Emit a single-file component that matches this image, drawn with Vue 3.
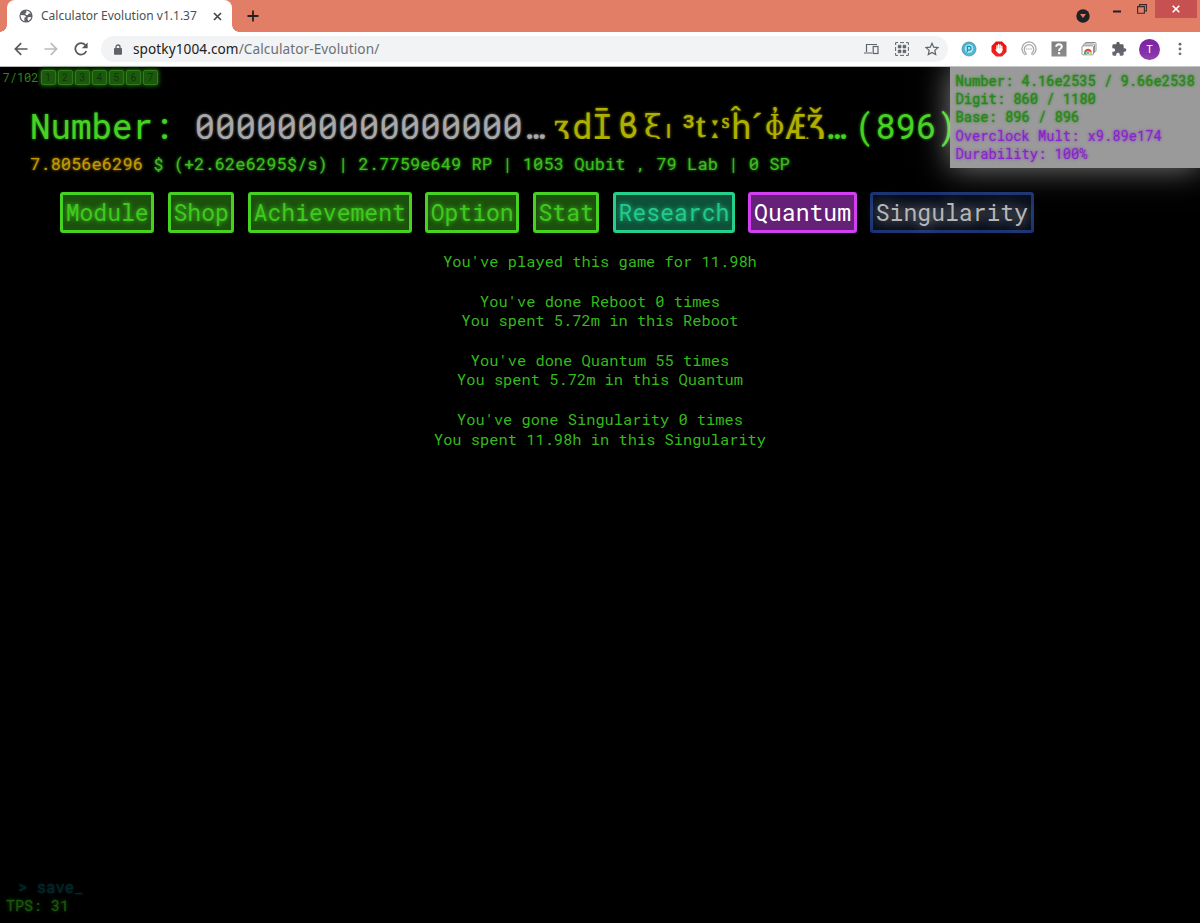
<template>
  <div class="window">
    <!-- Tab strip -->
    <div class="tab-strip">
      <div class="tab">
        <svg class="favicon" width="14" height="14" viewBox="0 0 14 14">
          <circle cx="7" cy="7" r="6.6" fill="#5f6368" />
          <path d="M1.6 6 L5 6.2 Q7 6.4 7 8 L5.4 8.8 V12.2 Q1.2 10.4 1.6 6Z M7.4 1.6 Q10.4 2 11.8 4.4 L9.8 4.6 L8.8 6 H7 L6.2 4.6 L7.4 3.6Z M8.6 8.6 L10.6 8 L12.4 8.2 Q11.6 10.8 9.4 12 L8.6 10.6Z" fill="#fff" />
        </svg>
        <span class="tab-title">Calculator Evolution v1.1.37</span>
        <svg class="tab-close" width="9" height="9" viewBox="0 0 9 9" stroke="#45494d" stroke-width="1.7">
          <path d="M1 1L8 8M8 1L1 8" />
        </svg>
      </div>
      <svg class="new-tab" width="12" height="12" viewBox="0 0 12 12" stroke="#202124" stroke-width="1.8">
        <path d="M6 0.5V11.5M0.5 6H11.5" />
      </svg>
      <div class="window-controls">
        <svg class="tab-search" width="14" height="14" viewBox="0 0 14 14">
          <circle cx="7" cy="7" r="6.7" fill="#202124" />
          <path d="M4 5H10L7 9Z" fill="#e27d66" />
        </svg>
        <svg class="minimize" width="8" height="3" viewBox="0 0 8 3"><path d="M0 0.5H8V2.5H0Z" fill="#202124" /></svg>
        <svg class="restore" width="10" height="10" viewBox="0 0 10 10" fill="none" stroke="#3a2a28" stroke-width="1.1">
          <path d="M2.5 2.5V0.6H9.4V7H7.6" />
          <path d="M0.6 2.6H7.4V9.2H0.6Z" />
        </svg>
        <div class="close-window">
          <svg width="8" height="8" viewBox="0 0 8 8" stroke="#fff" stroke-width="1.6"><path d="M0.7 0.7L7.3 7.3M7.3 0.7L0.7 7.3" /></svg>
        </div>
      </div>
    </div>

    <!-- Toolbar -->
    <div class="toolbar">
      <svg class="nav" width="14" height="14" viewBox="0 0 14 14" fill="none" stroke="#55595e" stroke-width="1.7">
        <path d="M13.5 7H1.5M7.2 1.2L1.4 7L7.2 12.8" />
      </svg>
      <svg class="nav" width="14" height="14" viewBox="0 0 14 14" fill="none" stroke="#b9bbbe" stroke-width="1.7">
        <path d="M0.5 7H12.5M6.8 1.2L12.6 7L6.8 12.8" />
      </svg>
      <svg class="nav" width="14" height="14" viewBox="0 0 14 14" fill="none" stroke="#55595e" stroke-width="1.8">
        <path d="M12.3 9A5.7 5.7 0 1 1 11.4 3.2" />
        <path d="M13.6 0.4V6.2H7.8Z" fill="#55595e" stroke="none" />
      </svg>
      <div class="address">
        <svg width="8" height="11" viewBox="0 0 8 11">
          <path d="M2 4.5V3A2 2 0 0 1 6 3V4.5" fill="none" stroke="#5f6368" stroke-width="1.3" />
          <rect x="0" y="4" width="8" height="6.8" rx="0.8" fill="#5f6368" />
        </svg>
        <span class="url"><b>spotky1004.com</b>/Calculator-Evolution/</span>
        <div class="address-icons">
          <svg width="15" height="14" viewBox="0 0 15 14" fill="none" stroke="#5f6368" stroke-width="1.2">
            <path d="M13 2.5H2.5V10M0 11H8" />
            <rect x="9.2" y="4.5" width="4.8" height="7" />
          </svg>
          <svg width="14" height="14" viewBox="0 0 14 14" fill="none" stroke="#5f6368">
            <path d="M0.6 3V0.6H3M5 0.6H9M11 0.6H13.4V3M13.4 5V9M13.4 11V13.4H11M9 13.4H5M3 13.4H0.6V11M0.6 9V5" />
            <path d="M3.2 3.2H6V6H3.2ZM8 3.2H10.8V6H8ZM3.2 8H6V10.8H3.2ZM8 8H10.8V10.8H8Z" fill="#5f6368" stroke-width="0.6" />
          </svg>
          <svg width="14" height="14" viewBox="0 0 14 14" fill="none" stroke="#5f6368" stroke-width="1.2">
            <path d="M7 1.3L8.7 5.2L13 5.6L9.8 8.4L10.7 12.6L7 10.4L3.3 12.6L4.2 8.4L1 5.6L5.3 5.2Z" />
          </svg>
        </div>
      </div>
      <div class="extensions">
        <svg width="16" height="16" viewBox="0 0 16 16">
          <circle cx="8" cy="8" r="7" fill="#35b5d5" stroke="#62838f" stroke-width="0.8" />
          <circle cx="8" cy="7.6" r="4.3" fill="#a9e5f1" />
          <path d="M6.4 11V5.4H8.6A1.9 1.9 0 0 1 8.6 9.1H6.8" fill="none" stroke="#1c87b0" stroke-width="1.3" />
        </svg>
        <svg width="16" height="16" viewBox="0 0 16 16">
          <path d="M5 0.5H11L15.5 5V11L11 15.5H5L0.5 11V5Z" fill="#e90b0b" />
          <path d="M6 8V4.6M7.6 8V3.4M9.2 8V3.8M10.8 9V5.2" stroke="#fff" stroke-width="1.3" stroke-linecap="round" />
          <path d="M5.4 7.6H11.4V10Q10.6 12.8 8.2 12.8Q6.6 12.4 4.2 8.6L5.4 8.4Z" fill="#fff" />
        </svg>
        <svg width="16" height="16" viewBox="0 0 16 16" fill="none" stroke="#a3a3a3">
          <path d="M4.4 13.9A7 7 0 1 1 11.6 13.9" stroke-width="1.3" />
          <path d="M5 12A4.7 4.7 0 1 1 11 12V14M5 12V14" stroke-width="1.3" />
          <path d="M5 8H11" stroke-dasharray="1.5 0.7" />
        </svg>
        <svg width="16" height="16" viewBox="0 0 16 16">
          <rect x="0.5" y="0.5" width="15" height="15" fill="#7d7d7d" />
          <path d="M5.2 5.8Q5.2 3.2 8 3.2Q10.8 3.3 10.8 5.5Q10.8 6.9 9.4 7.6Q8.1 8.3 8.1 9.9" fill="none" stroke="#fff" stroke-width="2" />
          <rect x="7" y="11.2" width="2.2" height="2.1" fill="#fff" />
        </svg>
        <svg width="16" height="16" viewBox="0 0 16 16" fill="#fff" stroke="#8b8b8b">
          <rect x="4" y="1.5" width="11" height="9" rx="1" />
          <rect x="2.5" y="3" width="11" height="9" rx="1" />
          <rect x="1" y="4.8" width="11.5" height="9" rx="1" />
          <path d="M3 13.3A4.2 4.2 0 0 1 4.5 8.8L7 11.5V13.3Z" fill="#38a852" stroke="none" />
          <path d="M3.6 9.8A4 4 0 0 1 11 10.8L7 11.5Z" fill="#e33b2e" stroke="none" />
          <path d="M10.9 10.5A4 4 0 0 1 11 13.3H7.5V11Z" fill="#f7c52b" stroke="none" />
          <circle cx="7" cy="12" r="1.5" fill="#3e7be0" stroke="#fff" stroke-width="0.6" />
        </svg>
        <svg width="16" height="16" viewBox="0 0 24 24">
          <path d="M20.5 11H19V7a2 2 0 0 0-2-2h-4V3.5a2.5 2.5 0 0 0-5 0V5H4a2 2 0 0 0-2 2v3.8h1.5a2.7 2.7 0 0 1 0 5.4H2V20a2 2 0 0 0 2 2h3.8v-1.5a2.7 2.7 0 0 1 5.4 0V22H17a2 2 0 0 0 2-2v-4h1.5a2.5 2.5 0 0 0 0-5z" fill="#55595e" />
        </svg>
      </div>
      <div class="avatar">T</div>
      <svg class="menu" width="4" height="14" viewBox="0 0 4 14" fill="#5f6368">
        <circle cx="2" cy="2.2" r="1.4" /><circle cx="2" cy="7" r="1.4" /><circle cx="2" cy="11.8" r="1.4" />
      </svg>
    </div>

    <!-- Game -->
    <div class="game">
      <div class="milestones">
        <span class="milestone-count">7/102</span>
        <span v-for="n in 7" :key="n" class="milestone">{{ n }}</span>
      </div>

      <div class="number-row">
        <span class="number-label">Number:</span>
        <span class="zeros">0000000000000000…</span>
        <span class="digits">
          <span v-for="(d, i) in digits" :key="i" class="digit" :class="d.font" :style="{ width: d.w + 'px' }">{{ d.c }}</span>
        </span>
        <span class="number-base"><span class="more">…</span>(896)</span>
      </div>

      <div class="money-row"><span class="money">7.8056e6296</span> $ (+2.62e6295$/s) | 2.7759e649 RP | 1053 Qubit , 79 Lab | 0 SP</div>

      <div class="tabs">
        <button v-for="t in tabs" :key="t.name" class="tab-btn" :class="t.type">{{ t.name }}</button>
      </div>

      <div class="stats">
        <div v-for="(group, i) in stats" :key="i" class="stat-group">
          <div v-for="line in group" :key="line">{{ line }}</div>
        </div>
      </div>

      <div class="footer">
        <div class="command">&gt; save_</div>
        <div class="tps">TPS: 31</div>
      </div>

      <div class="info-panel">
        <div>Number: 4.16e2535 / 9.66e2538</div>
        <div>Digit: 860 / 1180</div>
        <div>Base: 896 / 896</div>
        <div class="overclock">
          <div>Overclock Mult: x9.89e174</div>
          <div>Durability: 100%</div>
        </div>
      </div>
    </div>
  </div>
</template>

<script setup>
const digits = [
  { c: 'ʒ', w: 18, font: 'thin' },
  { c: 'd', w: 20 },
  { c: 'Ī', w: 26 },
  { c: 'ϐ', w: 26, font: 'mono' },
  { c: 'ξ', w: 21, font: 'serif' },
  { c: 'ı', w: 13, font: 'small' },
  { c: '³', w: 18 },
  { c: 't', w: 14, font: 'thin' },
  { c: 'ː', w: 12, font: 'sans' },
  { c: 'ˢ', w: 9, font: 'thin' },
  { c: 'ĥ', w: 20 },
  { c: '´', w: 14, font: 'thin' },
  { c: 'ɸ̓', w: 20, font: 'phi' },
  { c: 'Ǽ', w: 21 },
  { c: 'Ǯ', w: 19, font: 'thin' },
];

const tabs = [
  { name: 'Module', type: 'basic' },
  { name: 'Shop', type: 'basic' },
  { name: 'Achievement', type: 'basic' },
  { name: 'Option', type: 'basic' },
  { name: 'Stat', type: 'basic' },
  { name: 'Research', type: 'research' },
  { name: 'Quantum', type: 'quantum' },
  { name: 'Singularity', type: 'singularity' },
];

const stats = [
  ["You've played this game for 11.98h"],
  ["You've done Reboot 0 times", 'You spent 5.72m in this Reboot'],
  ["You've done Quantum 55 times", 'You spent 5.72m in this Quantum'],
  ["You've gone Singularity 0 times", 'You spent 11.98h in this Singularity'],
];
</script>

<style>
body {
  margin: 0;
  background: #000;
}
</style>

<style scoped>
.window {
  height: 100vh;
  display: flex;
  flex-direction: column;
  overflow: hidden;
  font-family: "Noto Sans", sans-serif;
}

svg {
  display: block;
  flex: none;
}

.tab-strip {
  height: 32px;
  flex: none;
  display: flex;
  align-items: center;
  background: #e27d66;
  padding-left: 7px;
}

.tab {
  position: relative;
  width: 225px;
  height: 32px;
  box-sizing: border-box;
  padding: 0 10px 0 12px;
  display: flex;
  align-items: center;
  background: #fff;
  border-radius: 8px 8px 0 0;
}

.tab::before,
.tab::after {
  content: "";
  position: absolute;
  bottom: 0;
  width: 7px;
  height: 7px;
}

.tab::before {
  left: -7px;
  background: radial-gradient(circle at 0 0, transparent 6.5px, #fff 7px);
}

.tab::after {
  right: -7px;
  background: radial-gradient(circle at 100% 0, transparent 6.5px, #fff 7px);
}

.tab-title {
  margin-left: 8px;
  font-size: 12px;
  line-height: 16px;
  padding-bottom: 1px;
  color: #4b4f54;
  white-space: nowrap;
}

.tab-close {
  margin-left: auto;
}

.new-tab {
  margin-left: 15px;
}

.window-controls {
  margin-left: auto;
  height: 32px;
  display: flex;
  align-items: flex-start;
}

.tab-search {
  margin: 9px 23px 0 0;
}

.minimize {
  margin: 10px 16px 0 0;
}

.restore {
  margin: 4px 8px 0 0;
}

.close-window {
  width: 42px;
  height: 18px;
  margin-right: 3px;
  display: flex;
  align-items: center;
  justify-content: center;
  background: #c75050;
}

.toolbar {
  height: 35px;
  flex: none;
  box-sizing: border-box;
  padding: 0 18px 0 14px;
  display: flex;
  align-items: center;
  background: #fff;
  border-bottom: 1px solid #b5b7b9;
}

.nav {
  margin-right: 16px;
}

.nav:nth-child(3) {
  margin-right: 13px;
}

.address {
  width: 847px;
  height: 26px;
  box-sizing: border-box;
  padding: 0 9px 0 13px;
  display: flex;
  align-items: center;
  background: #f1f3f4;
  border-radius: 13px;
}

.url {
  margin-left: 11px;
  padding-bottom: 1px;
  font-size: 13.6px;
  letter-spacing: 0.09px;
  color: #6c7074;
  white-space: nowrap;
}

.url b {
  font-weight: 400;
  color: #202124;
}

.address-icons {
  margin-left: auto;
  display: flex;
  gap: 16px;
}

.extensions {
  margin-left: 13px;
  display: flex;
  gap: 14px;
}

.avatar {
  margin-left: 12px;
  width: 21px;
  height: 21px;
  border-radius: 50%;
  background: #7b1fa2;
  color: #fff;
  font: 11px/21px Roboto, sans-serif;
  text-align: center;
}

.menu {
  margin-left: auto;
}

.game {
  position: relative;
  flex: 1;
  min-height: 0;
  display: flex;
  flex-direction: column;
  background: #000;
  color: #46d221;
  font-family: "Roboto Mono", "DejaVu Sans Mono", monospace;
  white-space: nowrap;
}

.milestones {
  height: 21px;
  padding-left: 2.5px;
  display: flex;
  align-items: center;
}

.milestone-count {
  width: 38px;
  font-size: 12px;
  line-height: 23px;
  color: #2b8516;
}

.milestone {
  width: 15px;
  height: 15px;
  margin-right: 2.1px;
  box-sizing: border-box;
  border: 1px solid #2a8016;
  border-radius: 2px;
  background: #1d580f;
  box-shadow: 0 0 4px 1px #22690f;
  color: #103608;
  font-size: 10px;
  line-height: 13px;
  text-align: center;
}

.number-row {
  height: 62px;
  margin-left: 30px;
  display: flex;
  align-items: flex-start;
  padding-top: 15px;
  box-sizing: border-box;
  font-size: 34.2px;
  line-height: 46px;
  text-shadow: 0 0 3px rgba(70, 210, 33, 0.7);
}

.number-label {
  width: 164.5px;
}

.zeros {
  width: 359.5px;
  color: #a8a8a8;
  text-shadow: 0 0 3px rgba(168, 168, 168, 0.7);
}

.digits {
  display: flex;
  height: 36px;
  margin-right: -1px;
  overflow: hidden;
  color: #b0b000;
  text-shadow: 0 0 3px rgba(176, 176, 0, 0.7);
}

.digit {
  flex: none;
}

.digit.serif {
  font-family: "DejaVu Serif", serif;
  font-size: 32px;
}

.digit.thin {
  font-family: "Liberation Serif", serif;
  -webkit-text-stroke: 0.5px currentColor;
}

.digit.mono {
  font-family: "DejaVu Sans Mono", monospace;
}

.digit.sans {
  font-family: "DejaVu Sans", sans-serif;
}

.digit.small {
  padding-top: 4px;
  font-family: "DejaVu Sans", sans-serif;
  font-size: 25px;
}

.digit.phi {
  font-family: "DejaVu Serif", serif;
  font-size: 28px;
}

.more {
  margin-right: 10px;
}

.money-row {
  margin-left: 30px;
  font-size: 17.12px;
  line-height: 27px;
  color: #3dbe1d;
  text-shadow: 0 0 3px currentColor;
}

.money {
  color: #c49a06;
}

.tabs {
  margin: 15px 0 0 60px;
  display: flex;
  gap: 13.5px;
}

.tab-btn {
  height: 41px;
  box-sizing: border-box;
  padding: 0 2.65px;
  border: 3px solid currentColor;
  border-radius: 3px;
  font: 23.07px/35px "Roboto Mono", "DejaVu Sans Mono", monospace;
  text-shadow: 0 0 5px currentColor;
}

.basic {
  border-color: #46d221;
  background: #1c500d;
  color: #3fc91e;
}

.research {
  border-color: #25cf8c;
  background: #0e5038;
  color: #20cb8a;
}

.quantum {
  border-color: #d13ff0;
  background: #652078;
  color: #fff;
  text-shadow: none;
}

.singularity {
  border-color: #1b3272;
  background: #050b18;
  color: #b6b6b6;
  text-shadow: 0 0 14px #ccc;
}

.stats {
  margin-top: 19.1px;
  display: flex;
  flex-direction: column;
  gap: 19.72px;
  align-items: center;
  font-size: 15.38px;
  line-height: 19.72px;
  color: #36b91c;
}

.stat-group {
  text-align: center;
}

.footer {
  margin-top: auto;
  padding: 0 0 9px 6px;
  font-size: 15px;
  line-height: 18px;
}

.command {
  padding-left: 12px;
  color: #05282b;
  font-size: 15.6px;
  text-shadow: 0 0 3px currentColor;
}

.tps {
  color: #1c570d;
  -webkit-text-stroke: 0.3px currentColor;
  text-shadow: 0 0 4px currentColor;
}

.info-panel {
  position: absolute;
  top: 0;
  right: 0;
  width: 250px;
  height: 101px;
  box-sizing: border-box;
  padding: 5px 0 0 5.5px;
  background: rgba(164, 164, 164, 0.94);
  box-shadow: 0 0 30px rgba(255, 255, 255, 0.5);
  color: #28871a;
  font-size: 13.75px;
  line-height: 18px;
  -webkit-text-stroke: 0.3px currentColor;
  text-shadow: 0 0 3px currentColor;
}

.overclock {
  margin-top: 1px;
  color: #8625c8;
  -webkit-text-stroke: 0;
}
</style>
